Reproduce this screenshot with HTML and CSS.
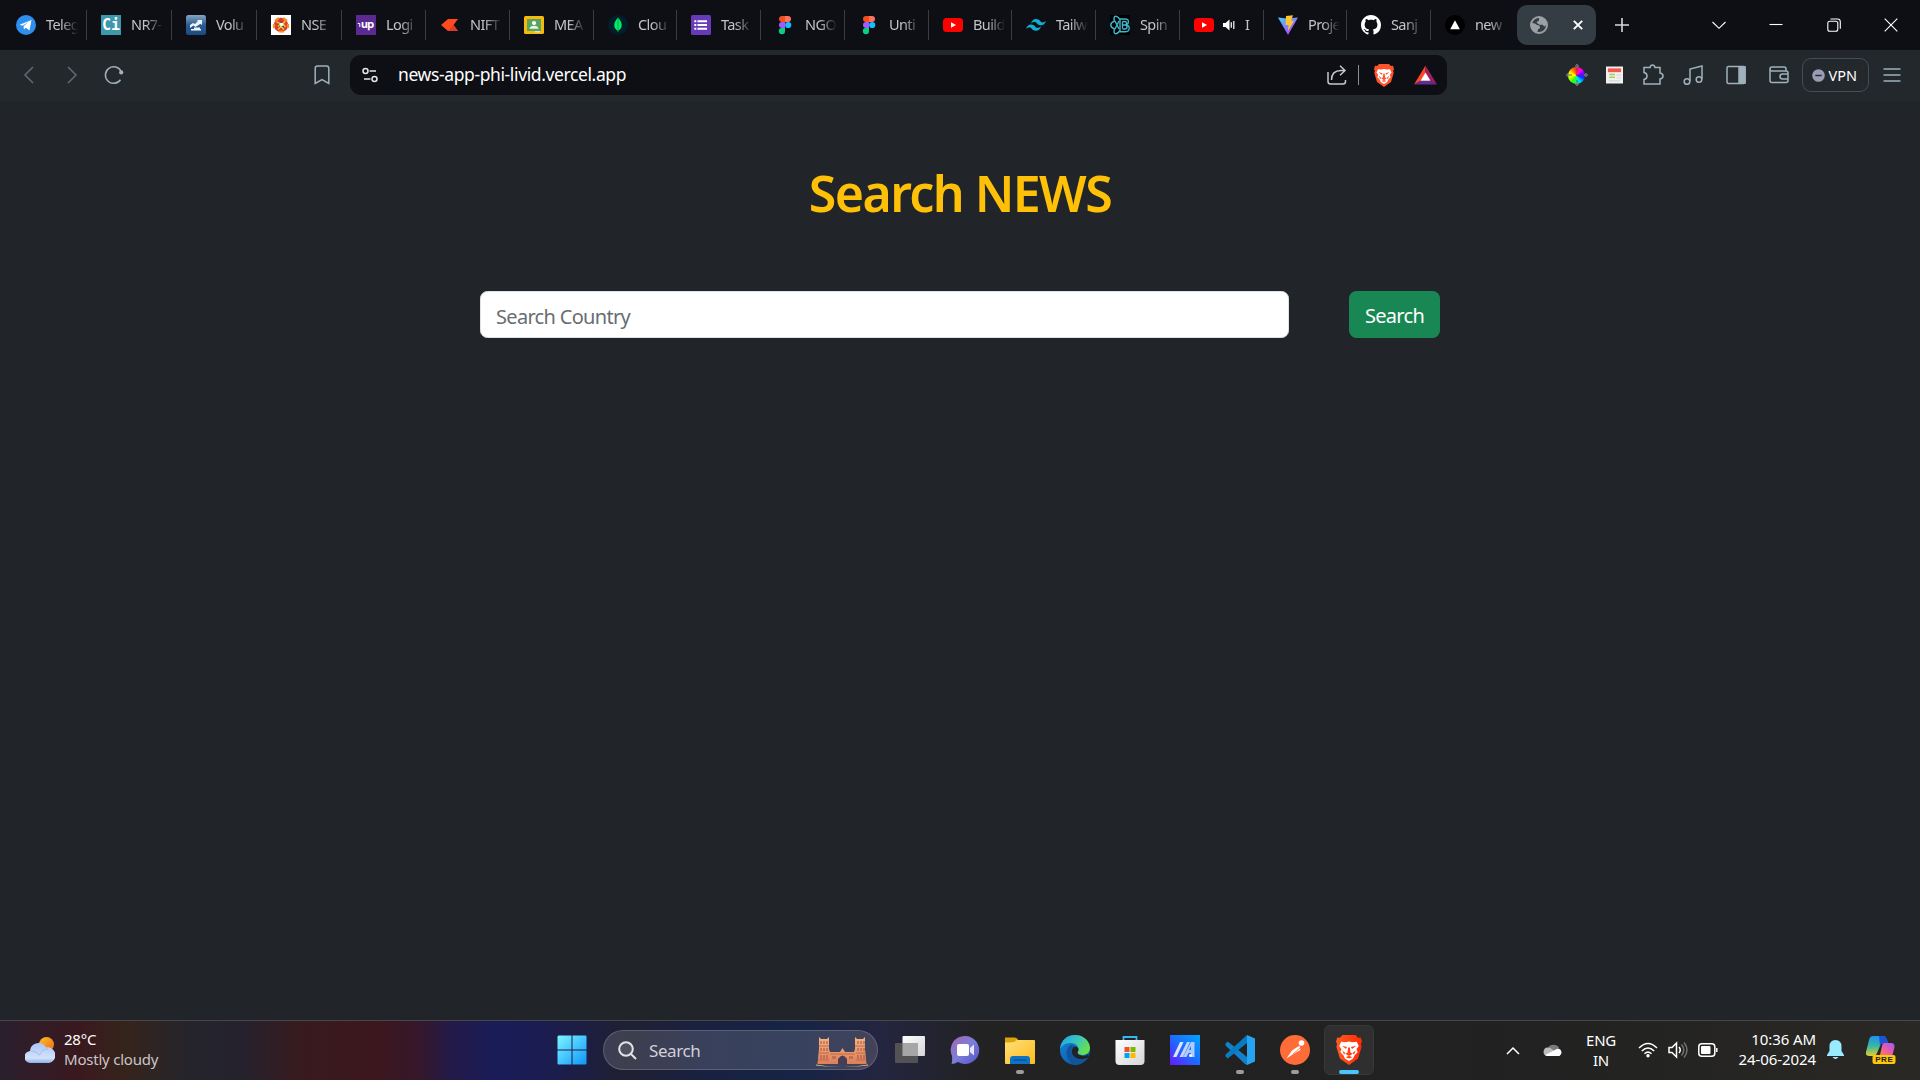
FILE: index.html
```html
<!DOCTYPE html>
<html lang="en">
<head>
<meta charset="utf-8">
<title>Search NEWS</title>
<link rel="stylesheet" href="styles.css">
</head>
<body>
<svg width="0" height="0" class="defs" aria-hidden="true">
  <defs>
    <linearGradient id="win" x1="0" y1="0" x2="1" y2="1"><stop offset="0" stop-color="#7df4ff"/><stop offset=".5" stop-color="#45c6ff"/><stop offset="1" stop-color="#0f94f8"/></linearGradient>
    <linearGradient id="sun" x1="0" y1="0" x2="1" y2="1"><stop offset="0" stop-color="#fbbf2c"/><stop offset="1" stop-color="#ef6a12"/></linearGradient>
    <linearGradient id="cloud" x1="0" y1="0" x2="0" y2="1"><stop offset="0" stop-color="#aac5f8"/><stop offset=".75" stop-color="#d3e2fb"/><stop offset="1" stop-color="#8aaee8"/></linearGradient>
    <linearGradient id="folder" x1="0" y1="0" x2="1" y2="1"><stop offset="0" stop-color="#ffe07a"/><stop offset="1" stop-color="#fdbb1c"/></linearGradient>
    <linearGradient id="chat" x1="0" y1="0" x2="1" y2="1"><stop offset="0" stop-color="#a266b0"/><stop offset=".5" stop-color="#7d7ed9"/><stop offset="1" stop-color="#5052c8"/></linearGradient>
    <linearGradient id="edgeTop" x1="0" y1="0" x2="1" y2=".5"><stop offset="0" stop-color="#1aa3e0"/><stop offset=".5" stop-color="#35c1c9"/><stop offset="1" stop-color="#66e04f"/></linearGradient>
    <linearGradient id="edgeLow" x1="0" y1="0" x2="1" y2="1"><stop offset="0" stop-color="#1787dd"/><stop offset="1" stop-color="#0b4b92"/></linearGradient>
    <linearGradient id="mi" x1="0" y1="1" x2="1" y2="0"><stop offset="0" stop-color="#6a16ff"/><stop offset=".5" stop-color="#1c6cff"/><stop offset="1" stop-color="#00a6ff"/></linearGradient>
    <linearGradient id="brv" x1="0" y1="0" x2="1" y2="0"><stop offset="0" stop-color="#ff5b22"/><stop offset="1" stop-color="#ff2a05"/></linearGradient>
    <linearGradient id="cop1" x1="0" y1="0" x2="0" y2="1"><stop offset="0" stop-color="#1f8ff0"/><stop offset=".5" stop-color="#37b8a0"/><stop offset="1" stop-color="#e8cc30"/></linearGradient>
    <linearGradient id="cop2" x1="1" y1="0" x2="0" y2="1"><stop offset="0" stop-color="#a05cf0"/><stop offset=".5" stop-color="#e25ab4"/><stop offset="1" stop-color="#ff8148"/></linearGradient>
    <linearGradient id="vite" x1="0" y1="0" x2=".8" y2="1"><stop offset="0" stop-color="#41d1ff"/><stop offset="1" stop-color="#bd34fe"/></linearGradient>
    <linearGradient id="vol" x1="0" y1="0" x2="0" y2="1"><stop offset="0" stop-color="#87a4c4"/><stop offset=".5" stop-color="#285d92"/><stop offset="1" stop-color="#1d4a80"/></linearGradient>
    <linearGradient id="grey" x1="0" y1="0" x2="1" y2="1"><stop offset="0" stop-color="#fff"/><stop offset="1" stop-color="#d5d5d5"/></linearGradient>
    <linearGradient id="tower" x1="0" y1="0" x2="0" y2="1"><stop offset="0" stop-color="#f8b681"/><stop offset="1" stop-color="#dc7f5a"/></linearGradient>
    <symbol id="figma" viewBox="0 0 20 20"><path d="M7 1h3v6H7a3 3 0 010-6z" fill="#f24e1e"/><path d="M10 1h3a3 3 0 010 6h-3z" fill="#ff7262"/><path d="M7 7h3v6H7a3 3 0 010-6z" fill="#a259ff"/><circle cx="13.2" cy="10" r="3.1" fill="#1abcfe"/><path d="M7 13h3v3a3.1 3.1 0 11-3-3z" fill="#0acf83"/></symbol>
    <symbol id="yt" viewBox="0 0 20 20"><rect y="3" width="20" height="14" rx="3.5" fill="#f00"/><path d="M8 7.2v5.6l5-2.8z" fill="#fff"/></symbol>
    <symbol id="brave" viewBox="0 0 20 23"><path d="M5 0h10l2 2 2-.2L20 5l-.8 1.8.5 2.2-2.7 9-7 5-7-5L.3 9l.5-2.2L0 5l1-3.200L3 2z"/><path d="M4 5.200l3.500.4L10 5l2.500.6 3.500-.4 1.500 3.300-1.800 2.500 1 2-2.500 2.800-1.200 2.500L10 20l-3-1.700-1.200-2.500-2.500-2.800 1-2-1.800-2.500z" fill="#fff"/><path d="M4.500 8.300l4 .9-.8 1.600zM15.500 8.300l-4 .9.800 1.600zM9.300 9.500h1.400l.4 4 1.800.8L10 16.200l-2.900-1.900 1.800-.8zM4.800 11.800l2.400 2-1 1.400zM15.200 11.800l-2.400 2 1 1.400zM7.500 17l2.500-1 2.500 1-2.500 1z"/></symbol>
  </defs>
</svg>

<header class="tabs">
  <nav class="tab-list">
    <div class="tab"><svg class="fav" viewBox="0 0 20 20"><circle cx="10" cy="10" r="10" fill="#2f8fee"/><path d="M3.600 9.800L15.500 5l-2 10.500-3.700-2.700-1.900 1.800-.3-3.400 5-4.400-6 3.900z" fill="#fff"/></svg><span>Teleg</span></div>
    <div class="tab"><svg class="fav" viewBox="0 0 20 20"><path fill="#3d98ae" d="M0 0h20v20H0z"/><text x="10" y="15" class="ci">Ci</text></svg><span>NR7-</span></div>
    <div class="tab"><svg class="fav" viewBox="0 0 20 20"><rect width="20" height="20" rx="2.500" fill="url(#vol)"/><path d="M4 10l3-2 2 1 3-3-1-1h5v5l-1.500-1.300L9.500 12l-2-1.500L4 13zM5 14h10v1.500H5zM8 12.500h6V14H8z" fill="#eef4fa"/></svg><span>Volu</span></div>
    <div class="tab"><svg class="fav" viewBox="0 0 20 20"><path fill="#fff" d="M0 0h20v20H0z"/><circle cx="10" cy="10" r="5.200" fill="#263c7a" stroke="#e2382e" stroke-width="4"/><path d="M4 6l4-3M12 3l4 3M17 9v4M13 16.500H8M3 13V9" stroke="#f2902a" stroke-width="2.200"/><path d="M5.500 7l4 1.500-2.500 3M14 6l-2 3 2.500 3M7 14.500l3-3 3 3" stroke="#f2c326" stroke-width="1.600" fill="none"/><path d="M8.500 8.500l3-1 1 3-3 1z" fill="#fff"/></svg><span>NSE</span></div>
    <div class="tab"><svg class="fav" viewBox="0 0 20 20"><path fill="#5b2a91" d="M0 0h20v20H0z"/><text x="11.300" y="12.800" class="up">up</text><path d="M1.800 8.500h2V12" stroke="#fff" fill="none"/></svg><span>Logi</span></div>
    <div class="tab"><svg class="fav" viewBox="0 0 20 20"><path d="M1 10l7-6h10l-4.500 6L18 16H8z" fill="#ff4b1f"/><path d="M8 16l5.500-6L18 16z" fill="#dc3c2c"/></svg><span>NIFT</span></div>
    <div class="tab"><svg class="fav" viewBox="0 0 20 20"><rect y="1" width="20" height="18" rx="1.500" fill="#f7b90c"/><path fill="#57a561" d="M3 4h14v12H3z"/><circle cx="10" cy="8" r="2.100" fill="#fff"/><path d="M5.500 13.700c0-4 9-4 9 0z" fill="#e8f4e9"/><path fill="#ddd" d="M11 16h5v1.500h-5z"/></svg><span>MEA</span></div>
    <div class="tab"><svg class="fav" viewBox="0 0 20 20"><circle cx="10" cy="10" r="10" fill="#021e2b"/><path d="M10 2.500c5.500 6 4.300 11 .3 13.300L10 17l-.3-1.200C5.700 13.500 4.500 8.500 10 2.500z" fill="#00ed64"/><path d="M10 3v14" stroke="#038c49" stroke-width=".7"/></svg><span>Clou</span></div>
    <div class="tab"><svg class="fav" viewBox="0 0 20 20"><rect width="20" height="20" rx="1.500" fill="#673ab7"/><path d="M6.500 6.200H16M6.500 10H16M6.500 13.800H16M3.300 6.200h2M3.300 10h2M3.300 13.800h2" stroke="#fff" stroke-width="2"/></svg><span>Task</span></div>
    <div class="tab"><svg class="fav"><use href="#figma"/></svg><span>NGO</span></div>
    <div class="tab"><svg class="fav"><use href="#figma"/></svg><span>Unti</span></div>
    <div class="tab"><svg class="fav"><use href="#yt"/></svg><span>Build</span></div>
    <div class="tab"><svg class="fav" viewBox="0 0 20 20"><path d="M5 8.500q1.300-4.500 5-4.500c4 0 4.500 3.500 6.500 3.500q2 0 3.500-1.800Q18.500 10.200 15 10.200c-4 0-4.500-3.500-6.500-3.500q-2 0-3.500 1.800zM0 14q1.300-4.500 5-4.500c4 0 4.500 3.500 6.500 3.500q2 0 3.500-1.800-1.300 4.500-5 4.500c-4 0-4.500-3.500-6.500-3.500Q1.500 12.200 0 14z" fill="#0fb0d3"/></svg><span>Tailw</span></div>
    <div class="tab"><svg class="fav" viewBox="0 0 20 20"><path fill="#000" d="M0 0h20v20H0z"/><g fill="none" stroke="#41b5cb" stroke-width="1.400"><path d="M10 4.500C7 0 2.500 0 4.500 6c-5 2-5 6 0 8-2 6 2.500 6 5.500 1.500"/><path d="M5 6l4 8M5 14l4-8"/><path d="M10 4h5c5 0 4 5.500.5 5.800 5 .3 5 7-.5 7h-5zM12.500 6.500v7M12.500 10h3M12.500 6.500h2.500c2 0 2 3.400 0 3.400M12.500 14H15c2.700 0 2.700-4 0-4"/></g></svg><span>Spin</span></div>
    <div class="tab audio"><svg class="fav"><use href="#yt"/></svg><svg class="snd" viewBox="0 0 12 12"><path d="M0 4h2.500L6.500.5v11L2.500 8H0z" fill="#fff"/><path d="M8.300 3.300v5.400M10.800 2v8" stroke="#eee" stroke-width="1.300"/></svg><span>I</span></div>
    <div class="tab"><svg class="fav" viewBox="0 0 20 20"><path d="M0 2.500l9 1 11-1L10 20z" fill="url(#vite)"/><path d="M8 1l7-.8-2 5.600h3L9.800 16.200l.8-6.200H7.500z" fill="#ffc52b"/></svg><span>Proje</span></div>
    <div class="tab"><svg class="fav" viewBox="0 0 16 16"><path fill="#fff" d="M8 0C3.580 0 0 3.580 0 8c0 3.540 2.290 6.530 5.470 7.590.4.070.55-.17.55-.38 0-.19-.01-.82-.01-1.490-2.010.37-2.530-.49-2.690-.94-.09-.23-.48-.94-.82-1.130-.28-.15-.68-.52-.01-.53.63-.01 1.080.58 1.230.82.72 1.210 1.870.87 2.330.66.070-.52.28-.87.51-1.070-1.780-.2-3.640-.89-3.640-3.950 0-.87.31-1.590.82-2.150-.08-.2-.36-1.020.08-2.120 0 0 .67-.21 2.200.82.64-.18 1.320-.27 2-.27s1.360.09 2 .27c1.530-1.040 2.200-.82 2.200-.82.44 1.100.16 1.920.08 2.120.51.56.82 1.270.82 2.150 0 3.070-1.870 3.750-3.650 3.950.29.25.54.73.54 1.480 0 1.070-.01 1.930-.01 2.200 0 .21.15.46.55.38A8.010 8.010 0 0016 8c0-4.420-3.580-8-8-8z"/></svg><span>Sanj</span></div>
    <div class="tab"><svg class="fav" viewBox="0 0 20 20"><circle cx="10" cy="10" r="10"/><path d="M10 5.300l4.800 9H5.200z" fill="#fff"/></svg><span>new</span></div>
    <div class="tab active"><svg class="globe" viewBox="0 0 18 18"><circle cx="9" cy="9" r="8" fill="#343d43" stroke="#9aa0a6" stroke-width="2"/><path d="M9 1c5 0 8 4 7.800 7.500l-2.300 2-2.500-2-1.500.5L8 8 6.500 6 9 4.500zM1.500 7l3.500.5 2 1.500 2.500.5.5 2.500L8 13.500 7 17C3 16 .8 12 1.500 7z" fill="#9aa0a6"/></svg><svg class="close" viewBox="0 0 10 10"><path d="M.8.8l8.400 8.400M9.200.8L.8 9.200" stroke="#fff" stroke-width="1.900"/></svg></div>
  </nav>
  <svg class="plus" viewBox="0 0 14 14"><path d="M7 0v14M0 7h14" stroke="#d7d9dc" stroke-width="1.600"/></svg>
  <div class="window-controls">
    <svg viewBox="0 0 14 14"><path d="M.5 4L7 10.300 13.500 4"/></svg>
    <svg viewBox="0 0 14 14"><path d="M.5 6.500h13"/></svg>
    <svg viewBox="0 0 14 14"><rect x=".8" y="3.200" width="10" height="10" rx="2"/><path d="M3.500 1h7q2.800 0 2.800 2.800v7"/></svg>
    <svg viewBox="0 0 14 14"><path d="M.7.7l12.600 12.600M13.300.7L.7 13.300"/></svg>
  </div>
</header>

<div class="toolbar">
  <div class="nav-buttons">
    <svg class="dim" viewBox="0 0 20 20"><path d="M14 2l-8 8 8 8"/></svg>
    <svg class="dim" viewBox="0 0 20 20"><path d="M6 2l8 8-8 8"/></svg>
    <svg viewBox="0 0 20 20"><path d="M16.500 14.800A8.300 8.300 0 1117.200 6.500"/><circle cx="17.200" cy="7.400" r="2.100" fill="#9fb1bb" stroke="none"/></svg>
  </div>
  <svg class="bookmark" viewBox="0 0 16 20"><path d="M1.200 3.500Q1.200 1 3.500 1h9q2.300 0 2.300 2.500v15L8 14.500l-6.800 4z"/></svg>
  <div class="address">
    <svg class="tune" viewBox="0 0 16 16"><circle cx="3.500" cy="4" r="2.500"/><path d="M7.500 4H14M2 12h6.500"/><circle cx="12.500" cy="12" r="2.500"/></svg>
    <span class="url">news-app-phi-livid.vercel.app</span>
    <svg class="share" viewBox="0 0 20 20"><path d="M1 7v9.500Q1 19 3.500 19H16q2.500 0 2.500-2.500V15M4.500 15q0-9.500 9.500-9.500h4M13 .8l5 4.700-5 4.700"/></svg>
    <i class="bar"></i>
    <svg class="shield"><use href="#brave"/></svg>
    <svg class="bat" viewBox="0 0 24 20"><path d="M12 0L0 20l12-7z" fill="#ff4724"/><path d="M12 0l12 20-12-7z" fill="#9e1f63"/><path d="M0 20h24l-7-4H7z" fill="#662d91"/><path d="M12 7.500l5.200 8.500H6.800z" fill="#fff"/></svg>
  </div>
  <div class="extensions">
    <div class="wheel"><i></i><svg viewBox="0 0 22 22"><path d="M11 0v6M11 16v6M0 11h6M16 11h6" stroke="#445"/><circle cx="11" cy="2" r="1.300"/><circle cx="11" cy="20" r="1.300"/><circle cx="2" cy="11" r="1.300"/><circle cx="20" cy="11" r="1.300"/></svg></div>
    <svg class="news" viewBox="0 0 18 18"><path d="M0 0h18v18H0z" fill="#f3f1ee"/><path d="M2 2h14v4H2z" fill="#f3564c"/><path d="M3.500 8.500h6M3.500 11.500h6" stroke="#99d15c" stroke-width="1.600"/><path d="M11 9h5M11 12h5M3 15h12" stroke="#ddd"/></svg>
    <svg class="puzzle" viewBox="0 0 22 22"><path d="M2 3.500h6q.5-2.500 2.500-2.500T13 3.500h5V9q3 .5 3 3t-3 3v5H2v-4.500q3-.5 3-3.500T2 8.500z"/></svg>
    <svg class="music" viewBox="0 0 20 20"><path d="M7 16V4l12-3v13"/><circle cx="4" cy="16.500" r="2.800"/><circle cx="16" cy="14.500" r="2.800"/></svg>
    <svg class="side" viewBox="0 0 20 20"><rect x="1" y="1.500" width="18" height="17" rx="1.500"/><path d="M13 2h6v16h-6z" fill="#9fb1bb"/></svg>
    <svg class="wallet" viewBox="0 0 20 20"><path d="M17 6V4q0-2-2-2H3Q1 2 1 4v11.500q0 2 2 2h14q2 0 2-2V8q0-2-2-2H3Q1 6 1 4M19 9h-5.500Q11 9 11 11.500T13.500 14H19"/></svg>
    <div class="vpn"><svg viewBox="0 0 13 13"><circle cx="6.500" cy="6.500" r="6.300" fill="#9b9bb4"/><path d="M3.300 6.500h6.400" stroke="#24282d" stroke-width="1.400"/></svg><span>VPN</span></div>
    <svg class="menu" viewBox="0 0 18 14"><path d="M.5 1h17M.5 7h17M.5 13h17"/></svg>
  </div>
</div>

<main>
  <h1>Search NEWS</h1>
  <form class="search">
    <input type="text" placeholder="Search Country" aria-label="Search Country">
    <button type="button">Search</button>
  </form>
</main>

<footer class="taskbar">
  <div class="weather">
    <svg viewBox="0 0 30 26"><circle cx="21.500" cy="7.500" r="7.500" fill="url(#sun)"/><path d="M6 26a6 6 0 01-1-12A8.500 8.500 0 0121 10.500 7.800 7.800 0 0124 26z" fill="url(#cloud)"/><path d="M6 14q6 0 8.500 4Q17 12 23 12" stroke="#8dacdf" fill="none" opacity=".6"/></svg>
    <div><p>28°C</p><p class="sky">Mostly cloudy</p></div>
  </div>
  <div class="apps">
    <svg class="start" viewBox="0 0 30 30"><path d="M1.500.5h13v14h-14v-13zM15.500.5h13q1 0 1 1v13h-14zM.5 15.500h14v14h-13q-1 0-1-1zM15.500 15.500h14v13q0 1-1 1h-13z" fill="url(#win)"/></svg>
    <div class="search-pill">
      <svg class="glass" viewBox="0 0 19 19"><circle cx="8" cy="8" r="6.800"/><path d="M13 13l5 5"/></svg>
      <span>Search</span>
      <svg class="fort" viewBox="0 0 52 31"><path d="M0 28.500q26 5 52 0v1q-26 3-52 0z" fill="#ebbf72"/><path d="M1.500 28L3 13V1l2 2h6l2-2v12l1 3h10l2.500-4 2.500 4h9l1-3V1l2 2h6l2-2v12l1.500 15z" fill="url(#tower)"/><path d="M22 28v-5q4.500-7 9 0v5z" fill="#483d55"/><path d="M3 10h10M3 17h10M39 10h10M40 17h9M14 18h25M2 24h11M40 24h10" stroke="#b85d48" stroke-width=".8"/><path d="M5 5v3M8 5v3M11 5v3M5 12v3M8 12v3M11 12v3M5 19v4M8 19v4M11 19v4M42 5v3M45 5v3M48 5v3M42 12v3M45 12v3M48 12v3M42 19v4M45 19v4M48 19v4M17 20v3M19 20v3M34 20v3M36 20v3" stroke="#a8584c" stroke-width="1.100"/></svg>
    </div>
    <div class="app"><svg viewBox="0 0 30 30"><rect x="7.500" y="1" width="22.500" height="20" rx="1" fill="url(#grey)"/><rect y="8" width="23" height="20" rx="1" fill="#555" opacity=".95"/><path d="M7.500 8H23v13H7.500z" fill="#a6a6a6"/></svg></div>
    <div class="app"><svg viewBox="0 0 30 30"><path d="M15 1a14 14 0 11-7 26q-3 2-6.500 2Q2.500 26 2 21A14 14 0 0115 1z" fill="url(#chat)"/><rect x="7" y="9" width="12" height="12" rx="2" fill="#fff"/><path d="M20 13l4-3.500v11L20 17z" fill="#e6e6ff"/></svg></div>
    <div class="app open"><svg viewBox="0 0 30 30"><path d="M0 2.500h9.500q2.500 0 4 3V12H0z" fill="#dfa20b"/><path d="M0 7.500q5 0 9-.5l3-2h17q1 0 1 1v22q0 1-1 1H1q-1 0-1-1z" fill="url(#folder)"/><path d="M5 29v-5q0-3 3-3h14q3 0 3 3v5z" fill="#0f73c4"/><path d="M8.500 25h13" stroke="#07509a" stroke-width="1.300"/></svg></div>
    <div class="app"><svg viewBox="0 0 30 30"><circle cx="15" cy="15" r="15" fill="url(#edgeLow)"/><path d="M0 14C1 5 7 0 15 0c9 0 15 6.500 15 13 0 5-4 7-7.500 7-3 0-5-1.200-5-2.500 0-.9 1-1.300 1-3.500 0-3-3.500-6-8-6C5 8 1.500 11 0 14z" fill="url(#edgeTop)"/><path d="M28 22.500C24 25 17 25 13.500 21c-3-3.500-2-7.500 1-9.500 2.500 0 4 1.500 4 3 0 1.500-1 2-1 3.300 0 1.500 2 3 5.500 3.200q3 0 5-1.500 1 .8 0 3z" fill="#202225"/><path d="M10.500 10C4 14 6 25 14 30c6 .3 11-3 14-7.500C23 25 17 25 13.500 21c-3.500-4-2-8 1-9.500-1-1-2.500-1.500-4-1.500z" fill="#10559b"/></svg></div>
    <div class="app"><svg viewBox="0 0 30 30"><path d="M8.500 7V2h13v5" fill="none" stroke="#36b7f1" stroke-width="1.800"/><path d="M.5 5h29v21q0 4-4 4h-21q-4 0-4-4z" fill="url(#grey)"/><path fill="#f05024" d="M9.500 12H14.500v5h-5z"/><path fill="#7db700" d="M15.500 12h5v5h-5z"/><path fill="#02a3ee" d="M9.500 18h5v5h-5z"/><path fill="#feb800" d="M15.500 18h5v5h-5z"/></svg></div>
    <div class="app"><svg viewBox="0 0 30 30"><path fill="url(#mi)" d="M0 0h30v30H0z"/><path d="M3 22L10 7h3.500L6.500 22z" fill="#dbe5ff"/><path d="M9.500 22L17 7h3l-7 15z" fill="#c2d3ff"/><path d="M13 22L21 7h3.500v15H21v-4h-2.500l-2 4z" fill="#aecbff"/><path d="M21 11v4h-2z" fill="#1673ff"/><circle cx="20.500" cy="20.500" r="1.500" fill="#fff"/></svg></div>
    <div class="app open"><svg viewBox="0 0 30 30"><path d="M2.800 6.500L.5 8.500v2L20 29l2 1v-8z" fill="#1380c9"/><path d="M22 0L.5 19.500v2l2.300 2L22 8z" fill="#087bc2"/><path d="M22 0l8 3.500v23L22 30z" fill="#27a4ef"/></svg></div>
    <div class="app open"><svg viewBox="0 0 30 30"><circle cx="15" cy="15" r="15" fill="#ff6c37"/><circle cx="21.500" cy="8" r="2.800" fill="#fff"/><path d="M19.500 10.500L12 15.500l-5.500 8 6-4 8-4.500z" fill="#fff"/><path d="M11 14l8-3.500M13 19l7-6" stroke="#ff6c37" stroke-width=".8"/></svg></div>
    <div class="app open current"><svg class="lion"><use href="#brave"/></svg></div>
  </div>
  <div class="tray">
    <svg class="up-arrow" viewBox="0 0 14 9"><path d="M1 8l6-6 6 6"/></svg>
    <svg class="onedrive" viewBox="0 0 20 14"><path d="M5 5a6 5.500 0 0111 0l-5 4z" fill="#7b7b7b"/><path d="M4 13a4.300 4.300 0 01.5-8.500q3 0 5 2L16 12z" fill="#bcbcbc"/><path d="M2 12l10-5q2-1.500 4-1.200a4 4 0 01.5 7.200H4z" fill="#fff"/></svg>
    <div class="lang"><p>ENG</p><p>IN</p></div>
    <svg class="wifi" viewBox="0 0 20 16"><path d="M1 6q9-9 18 0M3.800 9q6.200-6 12.400 0M6.500 11.800q3.500-3.400 7 0"/><circle cx="10" cy="13.800" r="1.700" fill="#fff" stroke="none"/></svg>
    <svg class="speaker" viewBox="0 0 20 18"><path d="M1 6.500h3L8.500 2v14L4 11.500H1z"/><path d="M11 6q2.500 3 0 6"/><path d="M13.500 3.500q4.500 5.500 0 11M16 1.500q6 7.500 0 15" opacity=".35"/></svg>
    <svg class="battery" viewBox="0 0 20 14"><rect x=".8" y=".8" width="16" height="12.400" rx="3"/><rect x="3" y="3" width="9.500" height="8" rx="1" fill="#fff" stroke="none"/><path d="M18.800 5v4"/></svg>
    <div class="clock"><p>10:36 AM</p><p>24-06-2024</p></div>
    <svg class="bell" viewBox="0 0 17 20"><path d="M8.500 0q6 0 6 6.500V11l2.500 4v1H0v-1l2.500-4V6.500q0-6.500 6-6.500z" fill="#99ebff"/><path d="M5.500 17h6q-3 4-6 0z" fill="#99ebff"/></svg>
    <svg class="copilot" viewBox="0 0 30 28"><path d="M7 0h10q3 0 4 4l1 3h-4q-3 0-4 3l-3 7q-1 3-4 3H3q-4 0-3-4L3 4q1-4 4-4z" fill="url(#cop1)"/><path d="M13 0h4q3 0 4 4l1 3h-4q-3 0-4 3z" fill="#1e50dc"/><path d="M18 7h7q4 0 3.500 4l-2 8H14l2-9q.5-3 2-3z" fill="url(#cop2)"/><rect x="6.500" y="19" width="23" height="9" rx="2" fill="#ffc60a"/><text x="18.300" y="26.300" class="pre">PRE</text></svg>
  </div>
</footer>
</body>
</html>
```
FILE: styles.css
```css
* { box-sizing: border-box; }
body {
  margin: 0;
  width: 1920px;
  height: 1080px;
  overflow: hidden;
  display: flex;
  flex-direction: column;
  background: #212529;
  color: #fff;
  font-family: "Noto Sans", "Open Sans", sans-serif;
}
p { margin: 0; }
svg { display: block; flex: none; }
.defs { position: absolute; }

/* tab strip */
.tabs {
  height: 50px;
  flex: none;
  display: flex;
  align-items: center;
  background: #0e0f14;
}
.tab-list {
  display: grid;
  grid-template-columns: 87px 85px 85px 85px 84px 84px 84px 83px 84px 84px 84px 83px 84px 84px 84px 83px 84px 86px 79px;
  align-items: center;
}
.tab {
  height: 30px;
  display: flex;
  align-items: center;
  gap: 10px;
  padding-left: 14px;
  border-right: 1px solid #3b3c40;
  font-size: 14.500px;
  letter-spacing: -.6px;
  color: #c2c4c7;
}
.tab:first-child { padding-left: 16px; }
.tab:nth-child(18) { border: 0; }
.fav { width: 20px; height: 20px; }
.tab span {
  width: 32px;
  margin-top: -2px;
  white-space: nowrap;
  -webkit-mask-image: linear-gradient(90deg, #000 45%, #0003 90%, transparent);
  mask-image: linear-gradient(90deg, #000 45%, #0003 90%, transparent);
}
.audio .snd { width: 12px; height: 12px; margin-left: -1px; }
.audio span { width: 9px; }
.tab.active {
  height: 40px;
  border: 0;
  border-radius: 10px;
  background: #343d43;
  padding: 0 13px;
  justify-content: space-between;
}
.globe { width: 18px; height: 18px; }
.close { width: 10px; height: 10px; }
.plus { width: 14px; height: 14px; margin-left: 19px; }
.window-controls {
  margin-left: auto;
  padding-right: 22px;
  display: flex;
  gap: 43.500px;
}
.window-controls svg {
  width: 14px;
  height: 14px;
  fill: none;
  stroke: #fff;
  stroke-width: 1.100;
}
.ci { font: bold 15px "DejaVu Sans Mono", monospace; letter-spacing: 0; text-anchor: middle; fill: #fff; }
.up { font: bold 11px Inter, sans-serif; text-anchor: middle; fill: #fff; }

/* toolbar */
.toolbar {
  height: 53px;
  flex: none;
  display: flex;
  align-items: center;
  padding: 0 0 2px 19px;
  background: #23282c;
  border-bottom: 1px solid #242226;
}
.toolbar svg { fill: none; stroke: #9fb1bb; stroke-width: 1.500; }
.nav-buttons { display: flex; gap: 23px; }
.nav-buttons svg { width: 20px; height: 20px; }
.nav-buttons svg:last-child { margin-left: -1px; }
.toolbar .dim { stroke: #626b71; }
.bookmark { width: 16px; height: 20px; margin-left: 190px; }
.address {
  width: 1097px;
  height: 40px;
  margin: 0 0 0 20px;
  padding: 0 10px 0 12px;
  display: flex;
  align-items: center;
  border-radius: 11px;
  background: #0e0f14;
}
.address .tune { width: 16px; height: 16px; stroke: #e3e5e8; }
.url {
  flex: 1;
  margin: -2px 0 0 20px;
  font-size: 17.500px;
  letter-spacing: -.380px;
}
.address .share { width: 20px; height: 20px; stroke: #c4c7ca; }
.bar { width: 1px; height: 20px; margin: 0 14.500px 0 11px; background: #8b8d91; }
.address .shield { width: 20px; height: 23px; fill: #fb542b; stroke: none; }
.address .bat { width: 23px; height: 20px; margin-left: 20.500px; stroke: none; }
.extensions { flex: 1; display: flex; align-items: center; padding-left: 118.500px; }
.wheel { display: grid; place-items: center; width: 22px; height: 22px; }
.wheel > * { grid-area: 1 / 1; }
.wheel i {
  width: 17px;
  height: 17px;
  border-radius: 50%;
  background: conic-gradient(#f22, #f0f, #80f, #03f, #0cf, #0f8, #3f0, #cf0, #ff0, #f80, #f22);
}
.wheel svg { width: 22px; height: 22px; stroke: #999; stroke-width: .8; }
.extensions .news { width: 17px; height: 18px; margin-left: 18.500px; stroke: none; }
.puzzle { width: 22px; height: 22px; margin-left: 18.500px; }
.music { width: 20px; height: 20px; margin-left: 19.500px; }
.side { width: 20px; height: 20px; margin-left: 22.500px; }
.wallet { width: 20px; height: 20px; margin-left: 23px; }
.vpn {
  width: 67px;
  height: 34px;
  margin-left: 13px;
  padding-left: 9px;
  display: flex;
  align-items: center;
  gap: 4px;
  border: 1px solid #424d54;
  border-radius: 9px;
  font-size: 14.500px;
  letter-spacing: 0;
}
.vpn svg { width: 13px; height: 13px; stroke: none; }
.menu { width: 18px; height: 14px; margin-left: 14px; }

/* page content */
main { flex: 1; padding-top: 60px; }
h1 {
  margin: 0;
  text-align: center;
  font-size: 50px;
  font-weight: 600;
  line-height: 60px;
  letter-spacing: -1.550px;
  color: #ffc107;
}
.search {
  width: 960px;
  margin: 68px auto 0;
  display: flex;
  gap: 60px;
}
.search input, .search button {
  height: 47px;
  padding: 3px 15px 0;
  border-radius: 7.500px;
  font: 400 20px/30px "Noto Sans", "Open Sans", sans-serif;
  letter-spacing: -.680px;
}
.search input { flex: 1; min-width: 0; border: 1px solid #dee2e6; background: #fff; color: #212529; }
.search input::placeholder { color: #686d71; opacity: 1; }
.search button { width: 91px; border: 0; background: #198754; color: #fff; }

/* taskbar */
.taskbar {
  height: 60px;
  flex: none;
  display: grid;
  grid-template-columns: 557px 1fr 414px;
  align-items: center;
  padding-bottom: 1px;
  border-top: 1px solid #47474a;
  background: linear-gradient(90deg, #2a1f2e 0, #3a191e 80px, #35241b 125px, #25242c 190px, #25222e 240px, #381b1e 300px, #3c171e 380px, #35182c 420px, #241a48 450px, #191c58 495px, #1a1c50 545px, #1f2032 625px, #192140 700px, #172445 800px, #242540 880px, #222 985px, #212121 1500px, #292824 1920px);
}
.weather { display: flex; align-items: center; gap: 9px; padding-left: 25px; font-size: 15px; line-height: 20px; letter-spacing: -.220px; }
.weather div { margin-top: -3px; }
.weather svg { width: 30px; height: 26px; }
.sky { color: #cac5c7; }
.apps { display: flex; align-items: center; }
.start { width: 30px; height: 30px; }
.search-pill {
  width: 275px;
  height: 40px;
  margin: 0 4px 0 16px;
  padding: 0 9px 0 14px;
  display: flex;
  align-items: center;
  border: 1px solid #ffffff2a;
  border-radius: 20px;
  background: #ffffff24;
}
.glass { width: 19px; height: 19px; fill: #ffffff18; stroke: #e3e4e8; stroke-width: 2; }
.search-pill span { flex: 1; margin-left: 12px; font-size: 17px; letter-spacing: -.4px; color: #cfd0d8; }
.fort { width: 52px; height: 31px; margin-top: 3px; }
.app { width: 55px; height: 50px; display: flex; flex-direction: column; align-items: center; padding-top: 10px; }
.app svg { width: 30px; height: 30px; }
.app.open::after { content: ""; width: 8px; height: 4px; margin-top: 5px; border-radius: 2px; background: #9c9c9c; }
.app.current { width: 50px; margin-left: 2px; border-radius: 6px; background: #2f2f2f; border: 1px solid #383838; padding-top: 9px; }
.app.current::after { width: 20px; background: #4cc2ff; }
.app .lion { width: 26px; fill: url(#brv); }
.tray { display: flex; align-items: center; font-size: 15px; line-height: 20px; letter-spacing: -.3px; }
.tray svg { fill: none; stroke: #fff; stroke-width: 1.500; }
.tray .up-arrow { width: 14px; height: 9px; }
.tray .onedrive, .tray .bell, .tray .copilot { stroke: none; }
.onedrive { width: 20px; height: 14px; margin-left: 23px; }
.lang { width: 40px; margin-left: 18px; text-align: center; }
.wifi { width: 20px; height: 16px; margin-left: 17px; }
.speaker { width: 20px; height: 18px; margin-left: 10px; }
.battery { width: 20px; height: 14px; margin-left: 10px; }
.clock { width: 88px; margin: -3px 0 0 10px; text-align: right; letter-spacing: -.080px; }
.bell { width: 17px; height: 20px; margin-left: 11px; }
.copilot { width: 30px; height: 28px; margin-left: 22px; }
.pre { font: bold 8px "Liberation Sans", sans-serif; letter-spacing: .6px; text-anchor: middle; fill: #222; }
```
